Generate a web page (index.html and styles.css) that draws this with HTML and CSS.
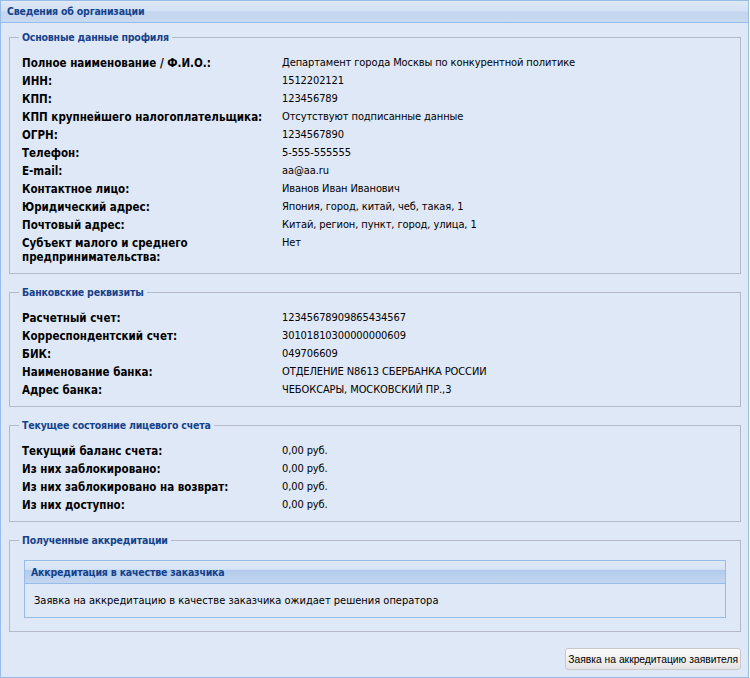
FILE: index.html
```html
<!DOCTYPE html>
<html lang="ru">
<head>
<meta charset="utf-8">
<title>Сведения об организации</title>
<link rel="stylesheet" href="styles.css">
</head>
<body>
<div class="panel">
  <div class="panel-header">Сведения об организации</div>
  <div class="panel-body">
    <fieldset class="fs">
      <legend>Основные данные профиля</legend>
      <div class="rows">
        <div class="lbl">Полное наименование / Ф.И.О.:</div><div class="val">Департамент города Москвы по конкурентной политике</div>
        <div class="lbl">ИНН:</div><div class="val">1512202121</div>
        <div class="lbl">КПП:</div><div class="val">123456789</div>
        <div class="lbl">КПП крупнейшего налогоплательщика:</div><div class="val">Отсутствуют подписанные данные</div>
        <div class="lbl">ОГРН:</div><div class="val">1234567890</div>
        <div class="lbl">Телефон:</div><div class="val">5-555-555555</div>
        <div class="lbl">E-mail:</div><div class="val">aa@aa.ru</div>
        <div class="lbl">Контактное лицо:</div><div class="val">Иванов Иван Иванович</div>
        <div class="lbl">Юридический адрес:</div><div class="val">Япония, город, китай, чеб, такая, 1</div>
        <div class="lbl">Почтовый адрес:</div><div class="val">Китай, регион, пункт, город, улица, 1</div>
        <div class="lbl lbl-wrap">Субъект малого и среднего предпринимательства:</div><div class="val">Нет</div>
      </div>
    </fieldset>
    <fieldset class="fs">
      <legend>Банковские реквизиты</legend>
      <div class="rows">
        <div class="lbl">Расчетный счет:</div><div class="val">12345678909865434567</div>
        <div class="lbl">Корреспондентский счет:</div><div class="val">30101810300000000609</div>
        <div class="lbl">БИК:</div><div class="val">049706609</div>
        <div class="lbl">Наименование банка:</div><div class="val">ОТДЕЛЕНИЕ N8613 СБЕРБАНКА РОССИИ</div>
        <div class="lbl">Адрес банка:</div><div class="val">ЧЕБОКСАРЫ, МОСКОВСКИЙ ПР.,3</div>
      </div>
    </fieldset>
    <fieldset class="fs">
      <legend>Текущее состояние лицевого счета</legend>
      <div class="rows">
        <div class="lbl">Текущий баланс счета:</div><div class="val">0,00 руб.</div>
        <div class="lbl">Из них заблокировано:</div><div class="val">0,00 руб.</div>
        <div class="lbl">Из них заблокировано на возврат:</div><div class="val">0,00 руб.</div>
        <div class="lbl">Из них доступно:</div><div class="val">0,00 руб.</div>
      </div>
    </fieldset>
    <fieldset class="fs fs-acc">
      <legend>Полученные аккредитации</legend>
      <div class="subpanel">
        <div class="subpanel-header">Аккредитация в качестве заказчика</div>
        <div class="subpanel-body">Заявка на аккредитацию в качестве заказчика ожидает решения оператора</div>
      </div>
    </fieldset>
    <div class="toolbar">
      <button class="btn" type="button">Заявка на аккредитацию заявителя</button>
    </div>
  </div>
</div>
</body>
</html>
```
FILE: styles.css
```css
html, body {
  margin: 0;
  padding: 0;
  background: #ffffff;
}
body {
  font-family: "DejaVu Sans Condensed", "DejaVu Sans", sans-serif;
  font-size: 11px;
  color: #000;
}
.panel {
  width: 749px;
  height: 678px;
  box-sizing: border-box;
  border: 1px solid #99bbe8;
  background: #dfe8f6;
  display: flex;
  flex-direction: column;
}
.panel-header {
  height: 21px;
  line-height: 21px;
  padding-left: 6px;
  font-weight: bold;
  font-size: 10.5px;
  letter-spacing: -0.2px;
  color: #15428b;
  border-bottom: 1px solid #99bbe8;
  background: linear-gradient(#dfe9f6 0%, #d3e1f3 45%, #c3d6ef 52%, #c8daf0 100%);
}
.panel-body {
  flex: 1;
  padding: 7px 7px 0 8px;
  display: flex;
  flex-direction: column;
}
.fs {
  margin: 0 0 11px 0;
  padding: 10px 12px 7px 12px;
  border: 1px solid #b5b8c8;
  min-width: 0;
}
.fs legend {
  font-weight: bold;
  font-size: 10.5px;
  letter-spacing: -0.2px;
  color: #15428b;
  padding: 0 3px;
  margin-left: -3px;
  line-height: 14px;
}
.rows {
  display: grid;
  grid-template-columns: 260px 1fr;
  line-height: 18px;
}
.lbl {
  font-weight: bold;
  font-size: 11.5px;
}
.lbl-wrap {
  width: 180px;
  line-height: 14px;
  padding-top: 2px;
  padding-bottom: 2px;
}
.val {
  letter-spacing: -0.1px;
}
.fs-acc {
  padding: 13px 14px 13px 14px;
}
.fs-acc legend {
  margin-left: -5px;
}
.subpanel {
  border: 1px solid #99bbe8;
  background: #dfe8f6;
}
.subpanel-header {
  height: 22px;
  line-height: 22px;
  padding-left: 6px;
  font-weight: bold;
  font-size: 10.5px;
  letter-spacing: -0.2px;
  color: #15428b;
  border-bottom: 1px solid #99bbe8;
  background: linear-gradient(#dfe9f6 0%, #d6e3f4 38%, #b3cbec 42%, #c3d6ef 100%);
}
.subpanel-body {
  height: 33px;
  line-height: 34px;
  padding-left: 9px;
}
.toolbar {
  display: flex;
  justify-content: flex-end;
  padding-top: 5px;
}
.btn {
  font-family: "Liberation Sans", Arial, sans-serif;
  font-size: 10.3px;
  height: 22px;
  padding: 0 2px;
  border: 1px solid #c9c9c9;
  border-radius: 3px;
  background: linear-gradient(#fbfbfb 0%, #f0f0f0 50%, #e3e3e3 100%);
  color: #000;
}
```
